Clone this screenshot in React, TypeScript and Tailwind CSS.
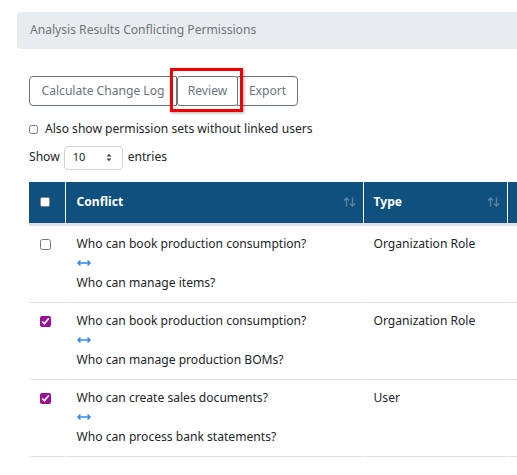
import React from 'react';

type Row = {
  checked: boolean;
  first: string;
  second: string;
  type: string;
};

const rows: Row[] = [
  { checked: false, first: 'Who can book production consumption?', second: 'Who can manage items?', type: 'Organization Role' },
  { checked: true, first: 'Who can book production consumption?', second: 'Who can manage production BOMs?', type: 'Organization Role' },
  { checked: true, first: 'Who can create sales documents?', second: 'Who can process bank statements?', type: 'User' },
];

const font = { fontFamily: '"Noto Sans", "Open Sans", "Liberation Sans", sans-serif' };

// double-headed arrow used between the two conflicting permissions
const SwapArrow = () => (
  <svg width="14" height="6" viewBox="0 0 14 6" className="block">
    <path d="M1 3h12" stroke="#1e7bf0" strokeWidth="1.4" />
    <path d="M3.5 0.5L1 3l2.5 2.5M10.5 0.5L13 3l-2.5 2.5" stroke="#1e7bf0" strokeWidth="1.3" fill="none" />
  </svg>
);

// faded up/down arrows of the sortable header
const SortIcon = () => (
  <svg width="13" height="10" viewBox="0 0 13 10" className="block">
    <g stroke="rgba(255,255,255,0.3)" strokeWidth="1.4" fill="none">
      <path d="M3.5 9.5V1M1 3.5L3.5 1 6 3.5" />
      <path d="M9.5 0.5V9M7 6.5L9.5 9 12 6.5" />
    </g>
  </svg>
);

const Checkbox = ({ checked }: { checked: boolean }) => (
  <input
    type="checkbox"
    defaultChecked={checked}
    className="m-0 w-[11px] h-[11px] accent-[#9b0f96]"
  />
);

export default function App() {
  return (
    <div
      className="w-[517px] h-[475px] overflow-hidden bg-white text-[#212529] text-[12.1px]"
      style={font}
    >
      <div className="ml-[17px] mt-[12px] w-[520px] h-[37px] bg-[#e9ecef] rounded-[4px] pl-[13px] flex items-center text-[#6c757d]">
        Analysis Results Conflicting Permissions
      </div>

      <div className="pl-[29px]">
        <div className="mt-[27px] flex h-[30px] w-fit relative">
          <button className="h-full w-[148px] border border-[#6c757d] rounded-l-[4px] text-[#6c757d] bg-white">
            Calculate Change Log
          </button>
          <button className="h-full w-[61px] border border-[#6c757d] rounded-[3px] text-[#6c757d] bg-white">
            Review
          </button>
          <button className="h-full w-[61px] -ml-px border border-[#6c757d] rounded-r-[4px] text-[#6c757d] bg-white">
            Export
          </button>
          <div className="absolute left-[141px] top-[-8px] w-[73px] h-[44px] border-[3px] border-[#ee0000] shadow-[1px_1px_3px_rgba(0,0,0,0.35)] pointer-events-none" />
        </div>

        <label className="mt-[16px] flex items-center gap-[7px] h-[15px]">
          <input type="checkbox" className="m-0 w-[9px] h-[9px]" />
          <span>Also show permission sets without linked users</span>
        </label>

        <div className="mt-[8px] flex items-center h-[25px]">
          <span>Show</span>
          <div className="ml-[4px] w-[59px] h-[24px] border border-[#ced4da] rounded-[4px] flex items-center justify-between pl-[8px] pr-[10px] text-[11px]">
            <span>10</span>
            <svg width="6" height="9" viewBox="0 0 6 9">
              <path d="M0.5 3.5L3 0.8l2.5 2.7z M0.5 5.5L3 8.2l2.5-2.7z" fill="#444" />
            </svg>
          </div>
          <span className="ml-[5px]">entries</span>
        </div>

        <table className="mt-[12px] border-collapse w-[540px] table-fixed">
          <colgroup>
            <col className="w-[36px]" />
            <col className="w-[298px]" />
            <col className="w-[144px]" />
            <col />
          </colgroup>
          <thead>
            <tr className="bg-[#10507f] text-white h-[42px] border-b-[3px] border-[#dee2e6]">
              <th className="border-r border-white px-[11px] text-left">
                <span className="block w-[10px] h-[10px] bg-white border border-[#888] rounded-[2px]" />
              </th>
              <th className="border-r border-white pl-[11px] pr-[7px] text-left font-bold">
                <div className="flex items-center justify-between">
                  <span>Conflict</span>
                  <SortIcon />
                </div>
              </th>
              <th className="border-r border-white pl-[10px] pr-[7px] text-left font-bold">
                <div className="flex items-center justify-between">
                  <span>Type</span>
                  <SortIcon />
                </div>
              </th>
              <th />
            </tr>
          </thead>
          <tbody>
            {rows.map((r, i) => (
              <tr key={i} className="border-b border-[#dee2e6] align-top">
                <td className="border-r border-white pl-[11px] pt-[11px]">
                  <Checkbox checked={r.checked} />
                </td>
                <td className="border-r border-white pl-[11px] pt-[8px] pb-[10px]">
                  <div className="leading-[19px]">{r.first}</div>
                  <div className="h-[20px] flex items-center">
                    <SwapArrow />
                  </div>
                  <div className="leading-[19px]">{r.second}</div>
                </td>
                <td className="border-r border-white pl-[10px] pt-[8px] leading-[19px]">{r.type}</td>
                <td />
              </tr>
            ))}
            <tr>
              <td className="pl-[11px] pt-[11px]">
                <Checkbox checked={false} />
              </td>
              <td className="border-r border-white h-[60px]" />
              <td className="border-r border-white" />
              <td />
            </tr>
          </tbody>
        </table>
      </div>
    </div>
  );
}
